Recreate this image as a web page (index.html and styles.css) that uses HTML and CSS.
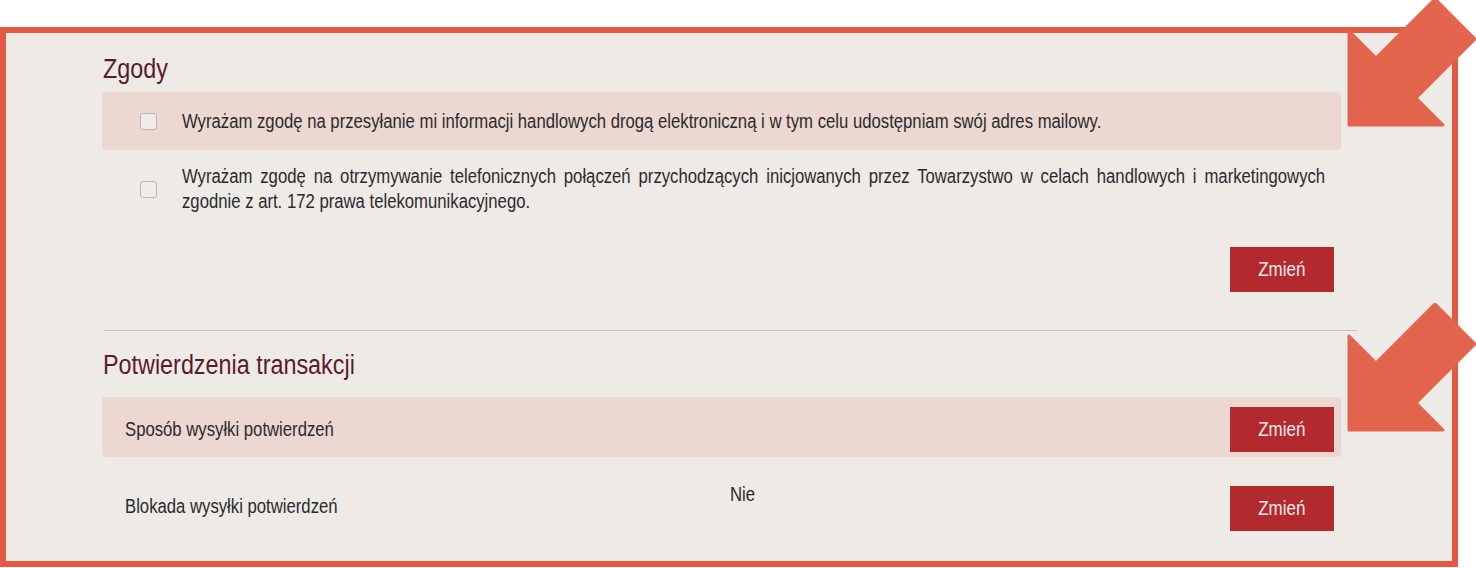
FILE: index.html
```html
<!DOCTYPE html>
<html lang="pl">
<head>
    <meta charset="UTF-8">
    <title>Zgody i potwierdzenia</title>
    <link rel="stylesheet" href="styles.css">
</head>
<body>

    <!-- Ramka z ustawieniami -->
    <div class="ramka">

        <!-- Zgody -->
        <h2 class="naglowek">Zgody</h2>
        <div class="wiersz wiersz-zgoda rozowy">
            <span class="checkbox"></span>
            <p class="tekst-zgody">Wyrażam zgodę na przesyłanie mi informacji handlowych drogą elektroniczną i w tym celu udostępniam swój adres mailowy.</p>
        </div>
        <div class="wiersz wiersz-zgoda wiersz-dlugi">
            <span class="checkbox"></span>
            <p class="tekst-zgody">Wyrażam zgodę na otrzymywanie telefonicznych połączeń przychodzących inicjowanych przez Towarzystwo w celach handlowych i marketingowych zgodnie z art. 172 prawa telekomunikacyjnego.</p>
        </div>
        <div class="akcje">
            <button><span class="waski">Zmień</span></button>
        </div>

        <hr class="separator">

        <!-- Potwierdzenia transakcji -->
        <h2 class="naglowek">Potwierdzenia transakcji</h2>
        <div class="wiersz wiersz-opcja rozowy">
            <span class="etykieta">Sposób wysyłki potwierdzeń</span>
            <button><span class="waski">Zmień</span></button>
        </div>
        <div class="wiersz wiersz-opcja wiersz-blokada">
            <span class="etykieta">Blokada wysyłki potwierdzeń</span>
            <span class="wartosc">Nie</span>
            <button><span class="waski">Zmień</span></button>
        </div>
    </div>

    <!-- Strzałki -->
    <svg class="strzalka strzalka-gora" viewBox="-2 -2 130 130">
        <polygon points="0,31 27,58 86,-1 126,39 67,98 94,125 0,125"/>
    </svg>
    <svg class="strzalka strzalka-dol" viewBox="-2 -2 130 130">
        <polygon points="0,31 27,58 86,-1 126,39 67,98 94,125 0,125"/>
    </svg>

</body>
</html>
```

FILE: styles.css
```css
body {
    font-family: "Liberation Sans", Arial, sans-serif;
    background-color: #ffffff;
    color: #2a2a2e;
    margin: 0;
    position: relative;
    width: 1476px;
    height: 568px;
    overflow: hidden;
}
/* font w oryginale jest waski - sciskamy tekst w poziomie */
.naglowek,
.etykieta,
.wartosc,
.tekst-zgody {
    transform: scaleX(0.835);
    transform-origin: left center;
}
.waski {
    display: inline-block;
    transform: scaleX(0.85);
}
.ramka {
    box-sizing: border-box;
    width: 1458px;
    height: 540px;
    margin-top: 27px;
    border: 6px solid #e25a44;
    background-color: #eeebe6;
    padding: 21px 0 0 96px;
}
.naglowek {
    margin: 0 0 0 1px;
    font-size: 27px;
    line-height: 30px;
    font-weight: normal;
    color: #5b1b2c;
    transform: scaleX(0.865);
}
.wiersz {
    box-sizing: border-box;
    width: 1239px;
    display: flex;
    align-items: center;
}
.rozowy {
    background-color: #ecd8d1;
    border-radius: 4px;
}
.wiersz-zgoda {
    margin-top: 8px;
    min-height: 58px;
    padding: 0 16px 0 38px;
}
.wiersz-dlugi {
    margin-top: 0;
    padding-top: 14px;
    padding-bottom: 14px;
}
.checkbox {
    flex: 0 0 auto;
    box-sizing: border-box;
    width: 17px;
    height: 17px;
    border: 1px solid #bcb5b1;
    border-radius: 3px;
    background-color: #f1ece9;
    margin-right: 25px;
}
.tekst-zgody {
    flex: 0 0 auto;
    width: 1369px;
    margin: 0 -226px 0 0;
    font-size: 20px;
    line-height: 25px;
    text-align: justify;
}
.akcje {
    width: 1239px;
    display: flex;
    justify-content: flex-end;
    padding-right: 7px;
    box-sizing: border-box;
    margin-top: 19px;
}
button {
    width: 104px;
    height: 45px;
    padding: 0;
    border: none;
    border-radius: 0;
    background-color: #b22a2e;
    color: #f7ecea;
    font-family: inherit;
    font-size: 20px;
    cursor: pointer;
}
button:hover {
    background-color: #9d2227;
}
.separator {
    width: 1253px;
    margin: 38px 0 19px 2px;
    border: none;
    border-top: 1px solid #c5c1bd;
}
.wiersz-opcja {
    font-size: 20px;
    line-height: 25px;
    padding: 10px 7px 5px 23px;
}
.rozowy.wiersz-opcja {
    margin-top: 17px;
}
.wiersz-opcja button {
    margin-left: auto;
}
.wiersz-blokada {
    align-items: flex-start;
    padding-top: 25px;
}
.wiersz-blokada .etykieta {
    width: 605px;
    align-self: center;
}
.wiersz-blokada button {
    margin-top: 4px;
}
.strzalka {
    position: absolute;
    left: 1347px;
    width: 130px;
    height: 130px;
    fill: #e3654e;
    stroke: #e3654e;
    stroke-width: 3;
    stroke-linejoin: round;
    pointer-events: none;
}
.strzalka-gora {
    top: -2px;
}
.strzalka-dol {
    top: 303px;
}
```
